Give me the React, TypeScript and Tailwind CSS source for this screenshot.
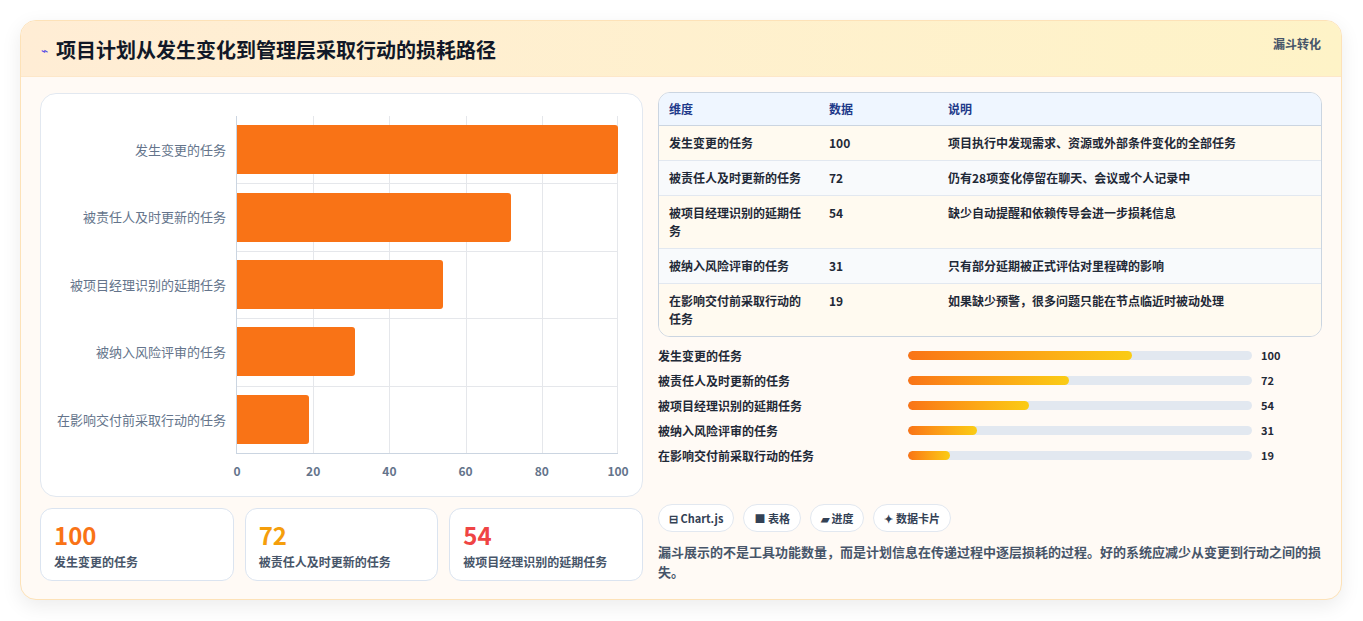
const rows = [
  { name: "发生变更的任务", v: 100, note: "项目执行中发现需求、资源或外部条件变化的全部任务" },
  { name: "被责任人及时更新的任务", v: 72, note: "仍有28项变化停留在聊天、会议或个人记录中" },
  { name: "被项目经理识别的延期任务", v: 54, note: "缺少自动提醒和依赖传导会进一步损耗信息" },
  { name: "被纳入风险评审的任务", v: 31, note: "只有部分延期被正式评估对里程碑的影响" },
  { name: "在影响交付前采取行动的任务", v: 19, note: "如果缺少预警，很多问题只能在节点临近时被动处理" },
];

const font = { fontFamily: '"Noto Sans CJK SC", "Noto Sans", sans-serif' };

function Chart() {
  return (
    <div className="h-[404px] rounded-2xl border border-[#e2e8f0] bg-white relative">
      <div className="absolute left-[195px] top-[22px] w-[382px] h-[338px] border-l border-b border-[#cbd5e1]">
        {[1, 2, 3, 4].map((i) => (
          <div key={i} className="absolute top-0 bottom-0 w-px bg-[#e5e7eb]" style={{ left: `${i * 20}%` }} />
        ))}
        <div className="absolute top-0 bottom-0 right-0 w-px bg-[#e5e7eb]" />
        {[1, 2, 3, 4].map((i) => (
          <div key={i} className="absolute left-0 right-0 h-px bg-[#e5e7eb]" style={{ top: `${i * 20}%` }} />
        ))}
        <div className="flex flex-col h-full">
          {rows.map((r) => (
            <div key={r.name} className="flex-1 flex items-center relative">
              <div className="absolute right-[calc(100%+11px)] whitespace-nowrap text-[13px] text-[#64748b]">{r.name}</div>
              <div className="h-[49px] bg-[#f97316] rounded-r-[3px]" style={{ width: `${r.v}%` }} />
            </div>
          ))}
        </div>
        {[0, 20, 40, 60, 80, 100].map((t, i) => (
          <div key={t} className="absolute top-[346px] -translate-x-1/2 text-[12px] font-bold text-[#64748b]" style={{ left: `${i * 20}%` }}>{t}</div>
        ))}
      </div>
    </div>
  );
}

export default function App() {
  return (
    <div className="w-[1363px] h-[621px] bg-white p-5 pr-[21px]" style={font}>
      <div className="h-[580px] rounded-2xl border border-[#fde2b8] bg-[#fffaf5] shadow-[0_6px_20px_rgba(0,0,0,0.08)] overflow-hidden">
        <div className="h-[56px] flex items-start justify-between px-5 bg-gradient-to-r from-[#ffedd5] to-[#fef3c7] border-b border-[#fde7c9]">
          <div className="flex items-center gap-2 mt-[14px]">
            <span className="text-[12px] text-[#4f46e5]">⌁</span>
            <span className="text-[20px] font-bold text-[#111827]">项目计划从发生变化到管理层采取行动的损耗路径</span>
          </div>
          <span className="mt-[14px] text-[12px] font-bold text-[#475569]">漏斗转化</span>
        </div>
        <div className="flex gap-[15px] px-[19px] pt-[16px]">
          <div className="w-[603px] flex flex-col gap-[11px]">
            <Chart />
            <div className="grid grid-cols-3 gap-[11px]">
              {rows.slice(0, 3).map((r, i) => (
                <div key={r.name} className="h-[73px] rounded-xl border border-[#dbe4f0] bg-white px-[13px] pt-[12px]">
                  <div className={`text-[24px] font-bold leading-[28px] ${["text-[#f97316]", "text-[#f59e0b]", "text-[#ef4444]"][i]}`}>{r.v}</div>
                  <div className="text-[12px] font-semibold text-[#475569] mt-[4px]">{r.name}</div>
                </div>
              ))}
            </div>
          </div>
          <div className="flex-1 mt-[-1px]">
            <div className="rounded-xl border border-[#cbd5e1] overflow-hidden text-[12px] font-semibold text-[#1f2937]">
              <div className="flex h-[33px] items-center bg-[#eff6ff] text-[#1e3a8a] border-b border-[#cbd5e1]">
                <div className="w-[170px] pl-[10px]">维度</div>
                <div className="w-[119px]">数据</div>
                <div>说明</div>
              </div>
              {rows.map((r, i) => (
                <div key={r.name} className={`flex py-[8px] leading-[18px] border-b last:border-b-0 border-[#e2e8f0] ${i % 2 ? "bg-[#f8fafc]" : "bg-[#fffaf0]"}`}>
                  <div className="w-[170px] pl-[10px] pr-[20px]">{r.name}</div>
                  <div className="w-[119px]">{r.v}</div>
                  <div>{r.note}</div>
                </div>
              ))}
            </div>
            <div className="mt-[10px] flex flex-col gap-[8px]">
              {rows.map((r) => (
                <div key={r.name} className="flex items-center h-[17px] text-[12px] font-semibold text-[#1f2937]">
                  <div className="w-[250px]">{r.name}</div>
                  <div className="w-[344px] h-[9px] rounded-full bg-[#e2e8f0] overflow-hidden">
                    <div className="h-full rounded-full bg-gradient-to-r from-[#f97316] to-[#facc15]" style={{ width: `${r.v * 0.65}%` }} />
                  </div>
                  <div className="ml-[9px] text-[11px] font-bold">{r.v}</div>
                </div>
              ))}
            </div>
            <div className="mt-[40px] flex gap-[9px] text-[11px] font-semibold text-[#334155]">
              <span className="h-[28px] px-[10px] flex items-center rounded-full border border-[#e2e8f0] bg-white">⊟ Chart.js</span>
              <span className="h-[28px] px-[10px] flex items-center rounded-full border border-[#e2e8f0] bg-white">■ 表格</span>
              <span className="h-[28px] px-[10px] flex items-center rounded-full border border-[#e2e8f0] bg-white">▰ 进度</span>
              <span className="h-[28px] px-[10px] flex items-center rounded-full border border-[#e2e8f0] bg-white">✦ 数据卡片</span>
            </div>
            <p className="mt-[10px] text-[13px] leading-[20px] font-semibold text-[#475569]">漏斗展示的不是工具功能数量，而是计划信息在传递过程中逐层损耗的过程。好的系统应减少从变更到行动之间的损失。</p>
          </div>
        </div>
      </div>
    </div>
  );
}
